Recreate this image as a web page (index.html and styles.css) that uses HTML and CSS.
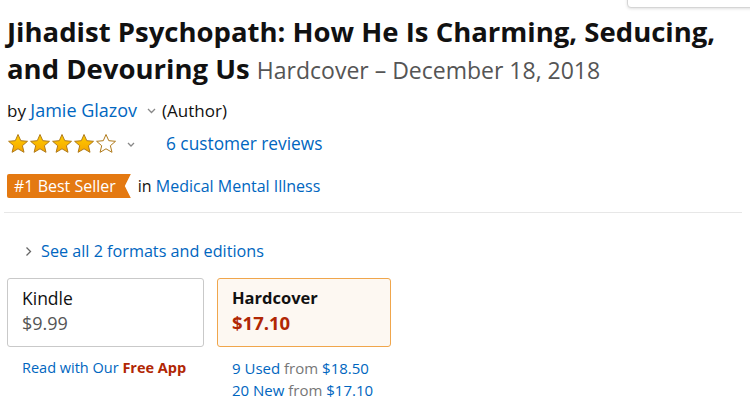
FILE: index.html
```html
<!DOCTYPE html>
<html>
<head>
<meta charset="utf-8">
<link rel="stylesheet" href="styles.css">
</head>
<body>
<div class="popover"></div>
<div class="page">
  <h1 class="title"><span class="title-main">Jihadist Psychopath: How He Is Charming, Seducing, and Devouring Us</span> <span class="title-sub">Hardcover – December 18, 2018</span></h1>
  <div class="byline">by <a class="link">Jamie Glazov</a><span class="caret"><svg width="9" height="6" viewBox="0 0 9 6"><path d="M1 1l3.5 3.5L8 1" fill="none" stroke="#888" stroke-width="1.3"/></svg></span>(Author)</div>
  <div class="rating">
    <span class="stars">
      <svg width="115" height="22" viewBox="0 0 115 22">
        <defs>
          <linearGradient id="g" x1="0" y1="0" x2="0" y2="1"><stop offset="0" stop-color="#ffce00"/><stop offset="1" stop-color="#f5a500"/></linearGradient>
          <path id="s" d="M11 1.5l2.8 6.2 6.7.6-5.1 4.4 1.6 6.6L11 15.8l-5.9 3.5 1.6-6.6-5.1-4.4 6.7-.6z"/>
        </defs>
        <use href="#s" x="0" fill="url(#g)" stroke="#b07a1a" stroke-width="1"/>
        <use href="#s" x="22" fill="url(#g)" stroke="#b07a1a" stroke-width="1"/>
        <use href="#s" x="44" fill="url(#g)" stroke="#b07a1a" stroke-width="1"/>
        <use href="#s" x="66" fill="url(#g)" stroke="#b07a1a" stroke-width="1"/>
        <use href="#s" x="88" fill="#fff" stroke="#b07a1a" stroke-width="1"/>
      </svg>
    </span>
    <span class="caret2"><svg width="8" height="5" viewBox="0 0 8 5"><path d="M1 1l3 3 3-3" fill="none" stroke="#888" stroke-width="1.3"/></svg></span>
    <a class="link reviews">6 customer reviews</a>
  </div>
  <div class="bestseller">
    <span class="badge">#1 Best Seller</span>
    <span class="in">in <a class="link">Medical Mental Illness</a></span>
  </div>
  <hr class="divider">
  <div class="formats"><span class="chev"><svg width="7" height="11" viewBox="0 0 7 11"><path d="M1.5 1.5l4 4-4 4" fill="none" stroke="#666" stroke-width="1.3"/></svg></span><a class="link">See all 2 formats and editions</a></div>
  <div class="swatches">
    <div class="swatch-col">
      <div class="swatch">
        <div class="fmt">Kindle</div>
        <div class="price">$9.99</div>
      </div>
      <div class="extra"><a class="link">Read with Our <span class="free">Free App</span></a></div>
    </div>
    <div class="swatch-col">
      <div class="swatch selected">
        <div class="fmt bold">Hardcover</div>
        <div class="price red">$17.10</div>
      </div>
      <div class="extra">
        <div><a class="link">9 Used</a> <span class="muted">from</span> <a class="link">$18.50</a></div>
        <div><a class="link">20 New</a> <span class="muted">from</span> <a class="link">$17.10</a></div>
      </div>
    </div>
  </div>
</div>
</body>
</html>
```

FILE: styles.css
```css
html, body { margin: 0; padding: 0; background: #fff; }
body { font-family: "Open Sans", "Noto Sans", sans-serif; color: #111; width: 750px; height: 420px; overflow: hidden; position: relative; }
.popover { position: absolute; top: -6px; left: 627px; width: 130px; height: 12px; border: 1px solid #d5d5d5; border-radius: 4px; background: #fff; box-shadow: 0 1px 3px rgba(0,0,0,0.12); }
.page { padding: 13px 8px 0 7px; }
.title { margin: 0; font-size: 27.5px; line-height: 37px; font-weight: 700; color: #111; }
.title-sub { font-weight: 400; font-size: 23px; color: #555; }
.link { color: #0066c0; text-decoration: none; }
.byline { font-size: 17px; line-height: 24px; margin-top: 7px; color: #111; }
.byline .link { font-size: 18px; }
.byline .caret { display: inline-block; margin: 0 6px 0 10px; vertical-align: 3px; }
.rating { display: flex; align-items: center; margin-top: 9px; height: 24px; }
.stars { display: flex; }
.caret2 { margin-left: 5px; display: flex; }
.reviews { margin-left: 31px; font-size: 17.3px; line-height: 22px; }
.bestseller { display: flex; align-items: center; margin-top: 18px; }
.badge { background: #e47911; color: #fff; font-size: 16px; padding: 0 15px 0 7px; height: 24px; line-height: 24px; border-radius: 2px 0 0 2px; clip-path: polygon(0 0, 100% 0, calc(100% - 6px) 50%, 100% 100%, 0 100%); }
.in { margin-left: 7px; font-size: 16px; line-height: 24px; }
.divider { border: 0; border-top: 1px solid #e7e7e7; margin: 14px 0 0 -3px; }
.formats { display: flex; align-items: center; margin-top: 27px; font-size: 16.2px; line-height: 22px; padding-left: 18px; }
.chev { display: flex; margin-right: 9px; }
.swatches { display: flex; gap: 13px; margin-top: 16px; }
.swatch { border: 1px solid #c9c9c9; border-radius: 3px; box-sizing: border-box; width: 197px; height: 69px; padding: 7px 14px; }
.swatch.selected { width: 174px; border-color: #f0a64c; background: #fdf8f2; }
.fmt { font-size: 17.5px; line-height: 24px; color: #111; }
.fmt.bold { font-size: 16.5px; font-weight: 700; }
.price { font-size: 18px; line-height: 26px; color: #555; }
.price.red { font-size: 18.5px; color: #b12704; font-weight: 700; }
.extra { font-size: 15px; line-height: 22px; padding: 10px 0 0 15px; }
.swatch-col:first-child .extra { font-size: 14.5px; }
.free { color: #b12704; font-weight: 700; }
.muted { color: #777; }
```
